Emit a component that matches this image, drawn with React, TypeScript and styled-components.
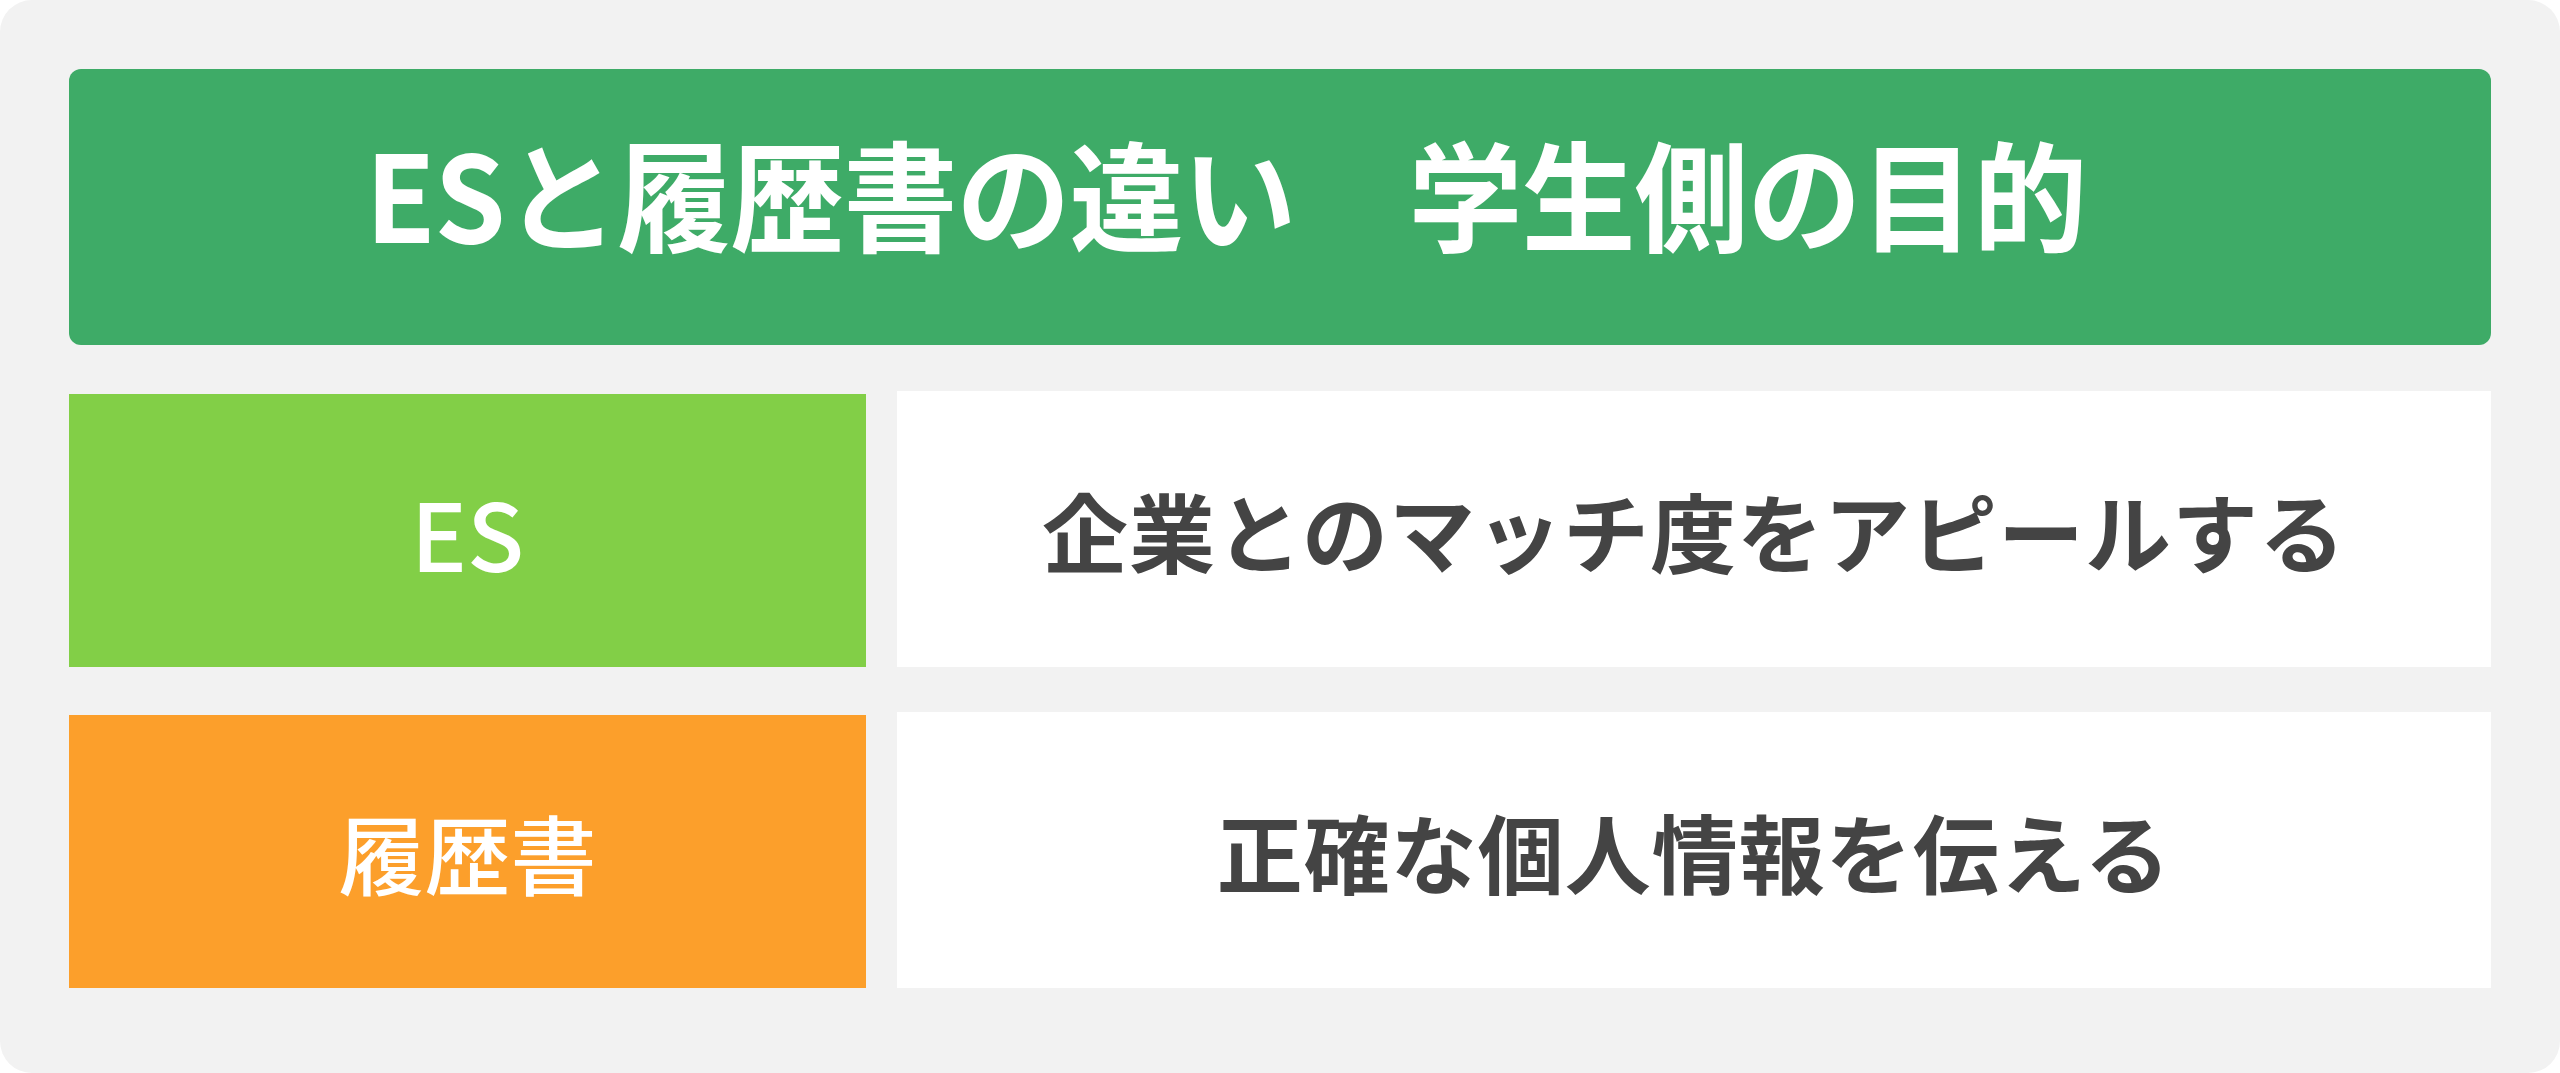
import React from 'react'
import styled, { createGlobalStyle } from 'styled-components'

const GlobalStyle = createGlobalStyle`
  html,
  body {
    margin: 0;
    padding: 0;
    background: #ffffff;
  }
  body {
    font-family: 'Noto Sans CJK JP', 'Noto Sans', sans-serif;
  }
`

interface Row {
  label: string
  text: string
  color: string
  latin?: boolean
}

const rows: Row[] = [
  { label: 'ES', text: '企業とのマッチ度をアピールする', color: '#82cf47', latin: true },
  { label: '履歴書', text: '正確な個人情報を伝える', color: '#fc9f2b' },
]

export default function App() {
  return (
    <>
      <GlobalStyle />
      <Card>
        <Header>
          <Title>ESと履歴書の違い　学生側の目的</Title>
        </Header>
        <Table>
          {rows.map(row => (
            <React.Fragment key={row.label}>
              <Label bg={row.color} latin={row.latin}>
                {row.label}
              </Label>
              <Cell>{row.text}</Cell>
            </React.Fragment>
          ))}
        </Table>
      </Card>
    </>
  )
}

const Card = styled.div`
  box-sizing: border-box;
  width: 2560px;
  height: 1073px;
  padding: 69px 69px 85px 69px;
  background: #f2f2f2;
  border-radius: 32px;
  display: flex;
  flex-direction: column;
  gap: 46px;
`

const Header = styled.div`
  height: 276px;
  flex-shrink: 0;
  background: #3eab67;
  border-radius: 12px;
  display: flex;
  align-items: center;
  justify-content: center;
  padding-right: 108px;
  padding-bottom: 30px;
  box-sizing: border-box;
`

const Title = styled.h1`
  margin: 0;
  color: #ffffff;
  font-size: 114px;
  font-weight: 700;
  line-height: 1;
  letter-spacing: -1px;
  white-space: nowrap;
  transform: scaleY(1.05);
`

const Table = styled.div`
  display: grid;
  grid-template-columns: 797px 1594px;
  grid-auto-rows: 276px;
  column-gap: 31px;
  row-gap: 45px;
`

const Label = styled.div<{ bg: string; latin?: boolean }>`
  display: flex;
  align-items: center;
  justify-content: center;
  background: ${props => props.bg};
  color: #ffffff;
  font-size: ${props => (props.latin ? '94px' : '86px')};
  font-weight: 500;
  margin-top: 3px;
`

const Cell = styled.div`
  display: flex;
  align-items: center;
  justify-content: center;
  background: #ffffff;
  color: #444444;
  font-size: 86px;
  font-weight: 700;
  letter-spacing: 1px;
`
